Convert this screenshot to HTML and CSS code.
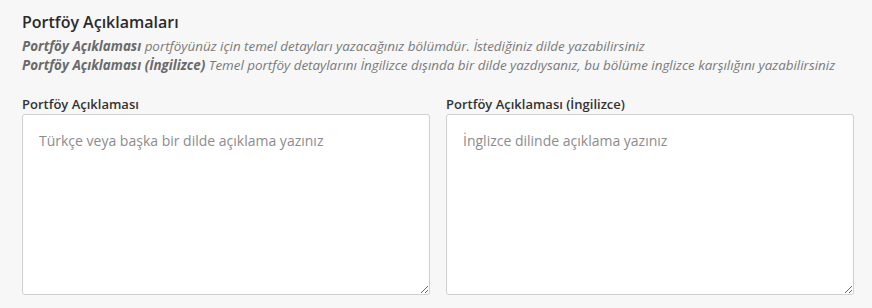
FILE: index.html
```html
<!DOCTYPE html>
<html lang="tr">
  <head>
    <meta charset="UTF-8" />
    <meta name="viewport" content="width=device-width, initial-scale=1.0" />
    <title>Portföy Açıklamaları</title>
    <link rel="stylesheet" href="styles.css">
  </head>
  <body>
    <section class="panel">
      <h2 class="panel-title">Portföy Açıklamaları</h2>
      <p class="hint"><b>Portföy Açıklaması</b> portföyünüz için temel detayları yazacağınız bölümdür. İstediğiniz dilde yazabilirsiniz</p>
      <p class="hint"><b>Portföy Açıklaması (İngilizce)</b> Temel portföy detaylarını İngilizce dışında bir dilde yazdıysanız, bu bölüme inglizce karşılığını yazabilirsiniz</p>

      <div class="fields">
        <div class="field">
          <label for="desc-tr">Portföy Açıklaması</label>
          <textarea id="desc-tr" placeholder="Türkçe veya başka bir dilde açıklama yazınız"></textarea>
        </div>
        <div class="field">
          <label for="desc-en">Portföy Açıklaması (İngilizce)</label>
          <textarea id="desc-en" placeholder="İnglizce dilinde açıklama yazınız"></textarea>
        </div>
      </div>
    </section>
  </body>
</html>
```

FILE: styles.css
```css
* {
  margin: 0;
  padding: 0;
  box-sizing: border-box;
}
body {
  font-family: "Open Sans", Lato, sans-serif;
  background-color: #f7f7f7;
  color: #333;
}
.panel {
  padding: 12px 18px 0 22px;
}
.panel-title {
  font-size: 16px;
  font-weight: 600;
  color: #2b2b2b;
  line-height: 20px;
  margin-bottom: 5px;
}
.hint {
  font-size: 13.4px;
  font-style: italic;
  color: #7a7a7a;
  line-height: 19px;
}
.hint b {
  font-weight: 700;
  color: #6a6a6a;
}
.fields {
  display: flex;
  column-gap: 16px;
  margin-top: 20px;
}
.field {
  display: flex;
  flex-direction: column;
  width: 408px;
}
.field label {
  font-size: 13px;
  font-weight: 600;
  color: #333;
  line-height: 18px;
  margin-bottom: 1px;
}
.field textarea {
  width: 408px;
  height: 181px;
  border: 1px solid #cfcfcf;
  border-radius: 3px;
  background: #fff;
  padding: 16px 16px;
  font-family: "Open Sans", Lato, sans-serif;
  font-size: 14px;
  color: #333;
  resize: both;
  outline: none;
}
.field textarea::placeholder {
  color: #8c8c8c;
}
```
